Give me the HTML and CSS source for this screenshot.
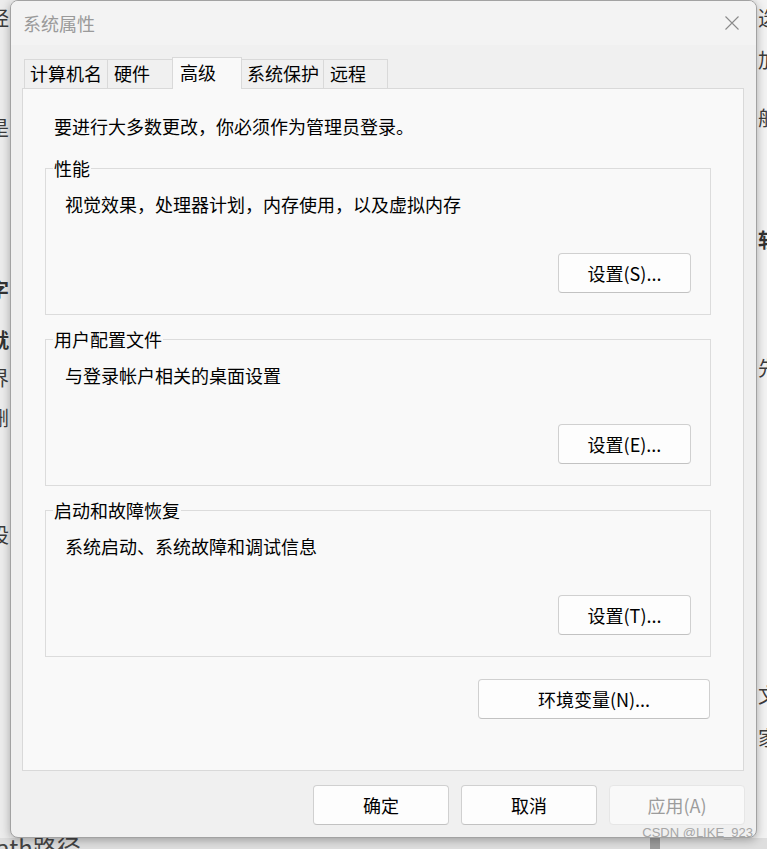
FILE: index.html
```html
<!DOCTYPE html>
<html lang="zh-CN">
<head>
<meta charset="utf-8">
<title>系统属性</title>
<link rel="stylesheet" href="styles.css">
</head>
<body>
<div class="desk">
  <div class="bg-left">
    <div class="frag l1">经</div>
    <div class="frag l2">是</div>
    <div class="frag l3 bold">字</div>
    <div class="frag l4 bold">就</div>
    <div class="frag l5">界</div>
    <div class="frag l6">删</div>
    <div class="frag l7">设</div>
  </div>
  <div class="bg-mid"></div>
  <div class="bg-right">
    <div class="frag r1">选</div>
    <div class="frag r2">加</div>
    <div class="frag r3">般</div>
    <div class="frag r4 bold">软</div>
    <div class="frag r5">先</div>
    <div class="frag r6">文</div>
    <div class="frag r7">家</div>
  </div>
  <div class="bg-bottom">
    <span class="path">ath路径</span>
    <span class="block"></span>
  </div>

  <div class="dialog">
    <div class="titlebar">
      <span class="title">系统属性</span>
      <span class="close">
        <svg width="16" height="16" viewBox="0 0 16 16"><path d="M1.5 1.5 L14.5 14.5 M14.5 1.5 L1.5 14.5" stroke="#8a8a8a" stroke-width="1.1" fill="none"/></svg>
      </span>
    </div>
    <div class="dlg-body">
      <div class="tabs">
        <div class="tab w1">计算机名</div>
        <div class="tab w2">硬件</div>
        <div class="tab active">高级</div>
        <div class="tab w4">系统保护</div>
        <div class="tab w5">远程</div>
      </div>
      <div class="panel">
        <p class="intro">要进行大多数更改，你必须作为管理员登录。</p>
        <fieldset class="group">
          <legend>性能</legend>
          <p class="desc">视觉效果，处理器计划，内存使用，以及虚拟内存</p>
          <div class="group-actions"><button class="btn set">设置(S)...</button></div>
        </fieldset>
        <fieldset class="group">
          <legend>用户配置文件</legend>
          <p class="desc">与登录帐户相关的桌面设置</p>
          <div class="group-actions"><button class="btn set">设置(E)...</button></div>
        </fieldset>
        <fieldset class="group">
          <legend>启动和故障恢复</legend>
          <p class="desc">系统启动、系统故障和调试信息</p>
          <div class="group-actions"><button class="btn set">设置(T)...</button></div>
        </fieldset>
        <div class="env-row"><button class="btn env">环境变量(N)...</button></div>
      </div>
      <div class="footer">
        <button class="btn dlg">确定</button>
        <button class="btn dlg">取消</button>
        <button class="btn dlg disabled">应用(A)</button>
      </div>
    </div>
    <div class="watermark">CSDN @LIKE_923</div>
  </div>
</div>
</body>
</html>
```
FILE: styles.css
```css
* { box-sizing: border-box; }
html, body { margin: 0; padding: 0; }
body {
  width: 767px;
  height: 849px;
  overflow: hidden;
  background: #f0f0f0;
  font-family: "Noto Sans CJK SC", "Noto Sans", sans-serif;
}
.desk {
  position: relative;
  display: grid;
  grid-template-columns: 10px 1fr 10px;
  grid-template-rows: 838px 11px;
  height: 849px;
  background: #f1f1f1;
  overflow: hidden;
}
.bg-left { grid-column: 1; grid-row: 1; overflow: hidden; display: flex; flex-direction: column; background: #ececec; }
.bg-right { grid-column: 3; grid-row: 1; overflow: hidden; display: flex; flex-direction: column; background: #f3f3f3; }
.bg-mid { grid-column: 2; grid-row: 1; }
.frag {
  font-size: 20px;
  line-height: 20px;
  height: 20px;
  width: 22px;
  color: #3c3c3c;
  flex: none;
}
.frag.bold { font-weight: 700; color: #333; }
.bg-left .frag { margin-left: -11px; }
.bg-right .frag { margin-left: 1px; }
.l1 { margin-top: 8px; }
.l2 { margin-top: 90px; }
.l3 { margin-top: 142px; }
.l4 { margin-top: 30px; }
.l5 { margin-top: 18px; }
.l6 { margin-top: 20px; }
.l7 { margin-top: 97px; }
.r1 { margin-top: 8px; }
.r2 { margin-top: 22px; }
.r3 { margin-top: 38px; }
.r4 { margin-top: 102px; }
.r5 { margin-top: 108px; }
.r6 { margin-top: 307px; }
.r7 { margin-top: 23px; }
.bg-bottom {
  grid-column: 1 / -1;
  grid-row: 2;
  display: flex;
  align-items: flex-start;
  overflow: hidden;
  background: #dedede;
}
.path {
  font-size: 24px;
  line-height: 24px;
  margin-top: -3px;
  margin-left: -4px;
  color: #444;
  flex: none;
}
.block {
  width: 10px;
  height: 11px;
  background: #9c9c9c;
  margin-left: 569px;
}

.dialog {
  position: absolute;
  left: 10px;
  top: 0;
  width: 747px;
  height: 838px;
  border: 1px solid #a2a2a2;
  border-radius: 8px;
  background: #f0f0f0;
  box-shadow: 0 2px 10px rgba(0, 0, 0, 0.3);
  display: flex;
  flex-direction: column;
}
.titlebar {
  height: 44px;
  flex: none;
  display: flex;
  align-items: center;
  justify-content: space-between;
  padding: 0 16px 0 12px;
  background: #f3f3f3;
  border-radius: 7px 7px 0 0;
}
.title { font-size: 18px; line-height: 24px; color: #9a9a9a; }
.close { display: flex; width: 16px; height: 16px; }

.dlg-body {
  flex: 1;
  display: flex;
  flex-direction: column;
  padding: 12px 12px 12px 11px;
}
.tabs {
  display: flex;
  align-items: flex-end;
  height: 31px;
  flex: none;
  padding-left: 2px;
  position: relative;
  z-index: 1;
}
.tab {
  height: 29px;
  border: 1px solid #d9d9d9;
  border-bottom: none;
  margin-right: -1px;
  padding-left: 5px;
  font-size: 18px;
  line-height: 27px;
  background: #f0f0f0;
  color: #000;
  white-space: nowrap;
}
.w1 { width: 84px; }
.w2 { width: 66px; padding-left: 6px; }
.w4 { width: 83px; }
.w5 { width: 65px; padding-left: 6px; }
.tab.active {
  width: 70px;
  height: 32px;
  margin-bottom: -1px;
  padding-left: 7px;
  line-height: 29px;
  background: #f9f9f9;
  position: relative;
  z-index: 2;
}
.panel {
  flex: 1;
  border: 1px solid #d9d9d9;
  background: #f9f9f9;
  padding: 0 32px 0 22px;
  position: relative;
  z-index: 0;
}
.intro {
  margin: 25px 0 0 9px;
  font-size: 18px;
  line-height: 24px;
  color: #000;
}
.group {
  margin: 12px 0 0 0;
  padding: 12px 19px 21px 19px;
  border: 1px solid #dcdcdc;
  min-width: 0;
}
.intro + .group { margin-top: 18px; }
.group legend {
  margin-left: -12px;
  padding: 0 1px;
  font-size: 18px;
  line-height: 24px;
  color: #000;
}
.desc {
  margin: 0;
  font-size: 18px;
  line-height: 24px;
  color: #000;
}
.group-actions {
  display: flex;
  justify-content: flex-end;
  margin-top: 37px;
}
.btn {
  height: 40px;
  padding: 0;
  border: 1px solid #d0d0d0;
  border-bottom-color: #c2c2c2;
  border-radius: 4px;
  background: #fdfdfd;
  font-family: inherit;
  font-size: 18px;
  line-height: 24px;
  color: #000;
}
.btn.set { width: 133px; }
.env-row {
  display: flex;
  justify-content: flex-end;
  margin-top: 22px;
  margin-right: 1px;
}
.btn.env { width: 232px; }
.footer {
  flex: none;
  display: flex;
  justify-content: flex-end;
  gap: 12px;
  margin-top: 14px;
  margin-right: -1px;
}
.btn.dlg { width: 136px; }
.btn.disabled {
  background: #f9f9f9;
  border-color: #e6e6e6;
  color: #9c9c9c;
}
.watermark {
  position: absolute;
  top: 825px;
  right: 3px;
  font-family: "Liberation Sans", Arial, sans-serif;
  font-size: 13px;
  line-height: 13px;
  color: #a6a6a6;
  white-space: nowrap;
}
```
